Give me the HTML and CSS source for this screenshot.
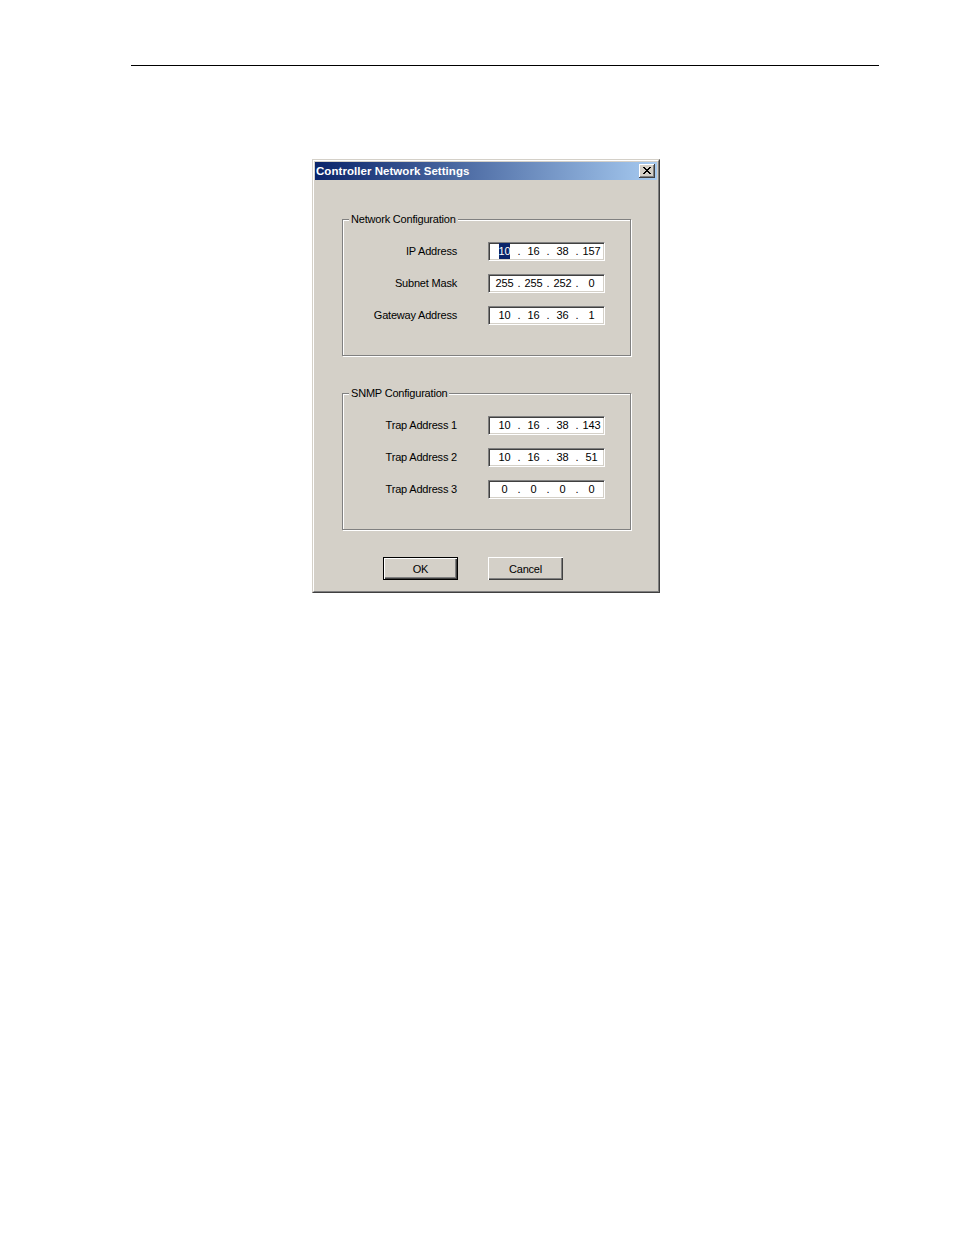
FILE: index.html
```html
<!DOCTYPE html>
<html>
<head>
<meta charset="utf-8">
<link rel="stylesheet" href="styles.css">
</head>
<body>
<div class="page">
  <div class="rule"></div>
  <div class="dialog">
    <div class="frame">
      <div class="titlebar">
        <span class="title">Controller Network Settings</span>
        <span class="close">
          <svg width="8" height="7" viewBox="0 0 8 7" shape-rendering="crispEdges"><path fill="#000" d="M0 0h2v1H0zM6 0h2v1H6zM1 1h2v1H1zM5 1h2v1H5zM2 2h4v1H2zM3 3h2v1H3zM2 4h4v1H2zM1 5h2v1H1zM5 5h2v1H5zM0 6h2v1H0zM6 6h2v1H6z"/></svg>
        </span>
      </div>
      <div class="client">
        <fieldset class="group">
          <legend>Network Configuration</legend>
          <div class="rows">
            <span class="lbl">IP Address</span>
            <div class="ip"><span class="oct"><span class="sel">10</span></span><span class="dot">.</span><span class="oct">16</span><span class="dot">.</span><span class="oct">38</span><span class="dot">.</span><span class="oct">157</span></div>
            <span class="lbl">Subnet Mask</span>
            <div class="ip"><span class="oct">255</span><span class="dot">.</span><span class="oct">255</span><span class="dot">.</span><span class="oct">252</span><span class="dot">.</span><span class="oct">0</span></div>
            <span class="lbl">Gateway Address</span>
            <div class="ip"><span class="oct">10</span><span class="dot">.</span><span class="oct">16</span><span class="dot">.</span><span class="oct">36</span><span class="dot">.</span><span class="oct">1</span></div>
          </div>
        </fieldset>
        <fieldset class="group second">
          <legend>SNMP Configuration</legend>
          <div class="rows">
            <span class="lbl">Trap Address 1</span>
            <div class="ip"><span class="oct">10</span><span class="dot">.</span><span class="oct">16</span><span class="dot">.</span><span class="oct">38</span><span class="dot">.</span><span class="oct">143</span></div>
            <span class="lbl">Trap Address 2</span>
            <div class="ip"><span class="oct">10</span><span class="dot">.</span><span class="oct">16</span><span class="dot">.</span><span class="oct">38</span><span class="dot">.</span><span class="oct">51</span></div>
            <span class="lbl">Trap Address 3</span>
            <div class="ip"><span class="oct">0</span><span class="dot">.</span><span class="oct">0</span><span class="dot">.</span><span class="oct">0</span><span class="dot">.</span><span class="oct">0</span></div>
          </div>
        </fieldset>
        <div class="buttons">
          <button class="btn default">OK</button>
          <button class="btn">Cancel</button>
        </div>
      </div>
    </div>
  </div>
</div>
</body>
</html>
```
FILE: styles.css
```css
html, body {
  margin: 0;
  padding: 0;
  background: #fff;
}

.page {
  padding-top: 65px;
  font-family: "Liberation Sans", Arial, sans-serif;
  font-size: 11px;
  letter-spacing: -0.2px;
  color: #000;
}

.rule {
  margin-left: 131px;
  width: 748px;
  height: 1px;
  background: #000;
}

.dialog {
  margin-top: 93px;
  margin-left: 312px;
  width: 348px;
  box-sizing: border-box;
  border: 1px solid;
  border-color: #d4d0c8 #404040 #404040 #d4d0c8;
  background: #d4d0c8;
}

.frame {
  border: 1px solid;
  border-color: #fff #808080 #808080 #fff;
  padding: 1px;
}

.titlebar {
  height: 18px;
  display: flex;
  align-items: center;
  justify-content: space-between;
  padding: 0 2px 0 1px;
  background: linear-gradient(to right, #0a246a, #a6caf0);
}

.title {
  font-family: "Liberation Sans", Arial, sans-serif;
  font-weight: bold;
  font-size: 11.5px;
  letter-spacing: 0.05px;
  color: #fff;
  line-height: 18px;
}

.close {
  width: 16px;
  height: 14px;
  box-sizing: border-box;
  background: #d4d0c8;
  box-shadow: inset -1px -1px #404040, inset 1px 1px #fff, inset -2px -2px #808080;
  display: flex;
  align-items: center;
  justify-content: center;
  padding: 0 1px 1px 0;
}

.close svg {
  display: block;
}

.client {
  padding: 33px 26px 10px 27px;
}

.group {
  margin: 0;
  padding: 16px 0 30px 0;
  border: 1px solid #808080;
  box-shadow: inset 1px 1px #fff, 1px 1px #fff;
  min-width: 0;
}

.group.second {
  margin-top: 31px;
}

.group legend {
  margin-left: 6px;
  padding: 0 2px;
  line-height: 13px;
  background: #d4d0c8;
}

.rows {
  display: grid;
  grid-template-columns: 114px 117px;
  column-gap: 31px;
  row-gap: 13px;
  align-items: center;
}

.lbl {
  text-align: right;
  line-height: 19px;
}

.ip {
  height: 19px;
  box-sizing: border-box;
  border: 1px solid;
  border-color: #808080 #fff #fff #808080;
  box-shadow: inset 1px 1px #404040, inset -1px -1px #d4d0c8;
  background: #fff;
  display: grid;
  grid-template-columns: 23px 6px 23px 6px 23px 6px 23px;
  padding-left: 4px;
  line-height: 17px;
}

.oct, .dot {
  text-align: center;
}

.sel {
  background: #0a246a;
  color: #fff;
  padding: 2px 0;
}

.buttons {
  display: flex;
  gap: 30px;
  margin-top: 27px;
  padding-left: 41px;
}

.btn {
  width: 75px;
  height: 23px;
  margin: 0;
  padding: 0;
  border: none;
  background: #d4d0c8;
  font: inherit;
  letter-spacing: inherit;
  color: #000;
  box-shadow: inset 1px 1px #fff, inset -1px -1px #404040, inset -2px -2px #808080;
}

.btn.default {
  box-shadow: inset 0 0 0 1px #000, inset 2px 2px #fff, inset -2px -2px #404040, inset -3px -3px #808080;
}
```
